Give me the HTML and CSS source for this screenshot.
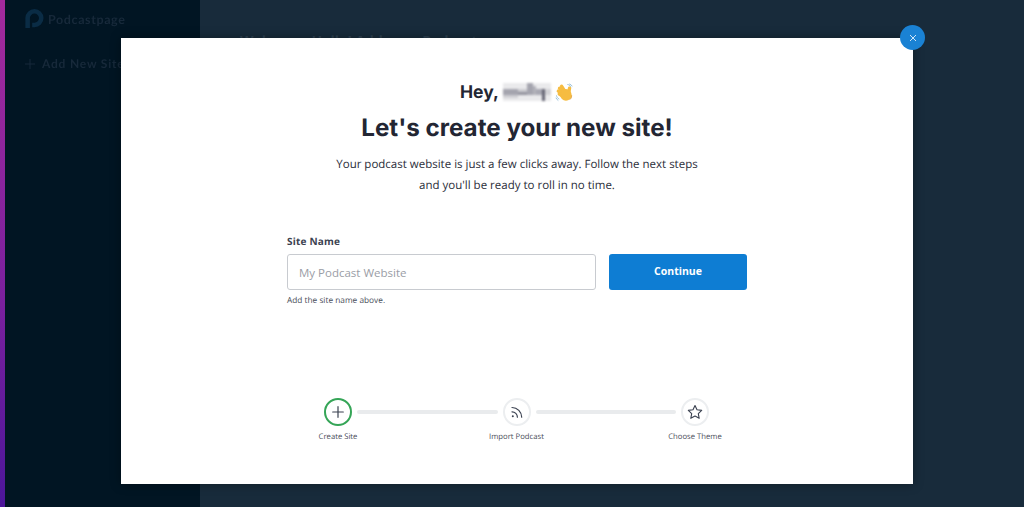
FILE: index.html
```html
<!DOCTYPE html>
<html lang="en">
<head>
  <meta charset="UTF-8" />
  <title>Create Site | Podcastpage</title>
  <link rel="stylesheet" href="styles.css">
</head>
<body>
  <div class="app">
    <div class="strip"></div>
    <aside class="sidebar">
      <div class="brand">
        <svg class="brand-logo" viewBox="0 0 22 22" width="20" height="20">
          <path d="M4 21V10a7.500 7.500 0 1 1 7.500 7.500H9" fill="none" stroke="#0a2c45" stroke-width="5"/>
        </svg>
        <span>Podcastpage</span>
      </div>
      <div class="add-site">
        <svg viewBox="0 0 12 12" width="12" height="12">
          <path d="M6 1v10M1 6h10" stroke="#17293a" stroke-width="1"/>
        </svg>
        <span>Add New Site</span>
      </div>
    </aside>
    <main class="content">
      <div class="welcome">Welcome, Hello! Add your Podcast</div>
    </main>
  </div>

  <div class="overlay">
    <div class="modal">
      <button class="close" aria-label="Close">
        <svg viewBox="0 0 8 8" width="8" height="8">
          <path d="M1 1l6 6M7 1l-6 6" stroke="#cfe6f7" stroke-width="1"/>
        </svg>
      </button>

      <div class="intro">
        <h3 class="hey">
          Hey,
          <svg class="blurred-name" viewBox="0 0 16 6" width="48" height="18" shape-rendering="crispEdges">
            <rect width="16" height="6" fill="#eaeaec"/>
            <rect x="0" y="2" width="5" height="2" fill="#a4a4ae"/>
            <rect x="0" y="4" width="5" height="1" fill="#cfcfd4"/>
            <rect x="5" y="3" width="3" height="1" fill="#94949f"/>
            <rect x="5" y="2" width="3" height="1" fill="#cbcbd0"/>
            <rect x="8" y="0" width="2" height="4" fill="#a4a4ae"/>
            <rect x="10" y="1" width="1" height="3" fill="#b2b2ba"/>
            <rect x="11" y="2" width="2" height="2" fill="#a8a8b2"/>
            <rect x="13" y="2" width="1" height="4" fill="#666674"/>
            <rect x="14" y="2" width="2" height="2" fill="#d2d2d6"/>
          </svg>
          <svg class="wave" viewBox="0 0 20 20" width="19" height="19">
            <path d="M13 1.500c1.800.2 3.200 1.400 3.800 3M15 1c1.300.4 2.500 1.200 3.200 2.500M1.500 13c.3 1.800 1.400 3.200 3 4M1 15.500c.5 1.200 1.300 2.200 2.500 3" fill="none" stroke="#7fb0d0" stroke-width=".8"/>
            <g stroke="#f6bc41" stroke-width="3.600" stroke-linecap="round">
              <path d="M11 10 7 3.500"/>
              <path d="M10.500 11 4.800 5.500"/>
              <path d="M9 12 3.500 8.500"/>
              <path d="M8.500 14 4.500 11.500"/>
              <path d="M14.500 10l.8-4.500"/>
            </g>
            <ellipse cx="11.500" cy="12.500" rx="6" ry="6.300" fill="#f6bc41"/>
            <path d="M15.500 17.500c1.300-1 2-2.500 2-4.500" fill="none" stroke="#dd9a2c" stroke-width="1"/>
          </svg>
        </h3>
        <h1>Let's create your new site!</h1>
        <p>Your podcast website is just a few clicks away. Follow the next steps<br>and you'll be ready to roll in no time.</p>
      </div>

      <form class="site-form">
        <label class="field-label" for="siteName">Site Name</label>
        <div class="field-row">
          <input type="text" id="siteName" placeholder="My Podcast Website" />
          <button type="button" class="continue">Continue</button>
        </div>
        <div class="field-help">Add the site name above.</div>
      </form>

      <div class="steps">
        <div class="step">
          <div class="step-icon active">
            <svg viewBox="0 0 16 16" width="16" height="16">
              <path d="M8 2.700v10.600M2.700 8h10.600" stroke="#3a4150" stroke-width="1.200" stroke-linecap="round"/>
            </svg>
          </div>
          <div class="step-name">Create Site</div>
        </div>
        <div class="step-line"></div>
        <div class="step">
          <div class="step-icon">
            <svg viewBox="0 0 16 16" width="16" height="16" fill="none" stroke="#3a4150" stroke-width="1.200" stroke-linecap="round">
              <circle cx="3.800" cy="12.300" r="1" fill="#3a4150" stroke="none"/>
              <path d="M3 7.800a5.400 5.400 0 0 1 5.400 5.400"/>
              <path d="M3 3.500a9.700 9.700 0 0 1 9.700 9.700"/>
            </svg>
          </div>
          <div class="step-name">Import Podcast</div>
        </div>
        <div class="step-line"></div>
        <div class="step">
          <div class="step-icon">
            <svg viewBox="0 0 16 16" width="16" height="16">
              <path d="M8 1.500l2 4.300 4.700.6-3.400 3.200.9 4.700L8 12l-4.200 2.300.9-4.700-3.400-3.200 4.700-.6Z" fill="none" stroke="#3a4150" stroke-width="1.100" stroke-linejoin="round"/>
            </svg>
          </div>
          <div class="step-name">Choose Theme</div>
        </div>
      </div>
    </div>
  </div>
</body>
</html>
```

FILE: styles.css
```css
* {
  box-sizing: border-box;
}

body {
  margin: 0;
  height: 507px;
  overflow: hidden;
  font-family: 'Open Sans', 'Noto Sans', sans-serif;
  text-rendering: geometricPrecision;
  background-color: #182b3b;
}

.app {
  display: flex;
  height: 100%;
}

.strip {
  width: 5px;
  background: linear-gradient(180deg, #a32a9c 0%, #7a209e 60%, #4c169a 100%);
}

.sidebar {
  width: 195px;
  background-color: #011523;
  padding: 9px 19px;
  filter: blur(0.5px);
}

.brand {
  display: flex;
  align-items: center;
  gap: 4px;
  color: #17293a;
  font-family: 'Lato', sans-serif;
  font-weight: 700;
  font-size: 12.500px;
  letter-spacing: 0.6px;
}

.add-site {
  display: flex;
  align-items: center;
  gap: 6px;
  margin-top: 27px;
  color: #17293a;
  font-family: 'Lato', sans-serif;
  font-weight: 700;
  font-size: 12px;
  letter-spacing: 0.8px;
  white-space: nowrap;
}

.content {
  flex: 1;
  padding: 32px 40px;
}

.welcome {
  color: #2d4050;
  font-size: 14px;
  font-weight: 700;
}

.overlay {
  position: absolute;
  left: 121px;
  top: 38px;
}

.modal {
  position: relative;
  width: 792px;
  height: 446px;
  background: white;
  box-shadow: 0 0 10px rgba(0, 0, 0, 0.35);
  padding-top: 41px;
}

.close {
  position: absolute;
  right: -12px;
  top: -13px;
  width: 25px;
  height: 25px;
  border: none;
  border-radius: 50%;
  padding: 0;
  display: flex;
  align-items: center;
  justify-content: center;
  background-color: #1a82d4;
}

.intro {
  text-align: center;
  color: #232633;
}

.hey {
  margin: 0;
  display: flex;
  justify-content: center;
  align-items: center;
  gap: 4px;
  height: 26px;
  font-family: 'Inter', sans-serif;
  font-size: 17.500px;
  font-weight: 700;
}

.blurred-name {
  filter: blur(0.8px);
}

.intro h1 {
  margin: 6px 0 0;
  font-family: 'Inter', sans-serif;
  font-size: 24.200px;
  line-height: 34px;
  font-weight: 700;
}

.intro p {
  margin: 9px 0 0;
  font-size: 11.500px;
  line-height: 21px;
  color: #2b2e3a;
}

.site-form {
  width: 460px;
  margin: 38px 0 0 166px;
}

.field-label {
  display: block;
  font-size: 10px;
  font-weight: 700;
  color: #3c4250;
  letter-spacing: 0.2px;
  line-height: 15px;
  margin-bottom: 5px;
}

.field-row {
  display: flex;
  gap: 13px;
}

.field-row input {
  width: 309px;
  height: 36px;
  padding: 0 11px;
  border: 1px solid #c8cbd0;
  border-radius: 3px;
  font-family: inherit;
  font-size: 11.500px;
  color: #333;
}

.field-row input::placeholder {
  color: #9a9da6;
  opacity: 1;
}

.continue {
  width: 138px;
  height: 36px;
  border: none;
  border-radius: 3px;
  padding: 0 0 2px;
  background-color: #0e7dd3;
  color: white;
  font-family: inherit;
  font-size: 10.500px;
  font-weight: 700;
}

.field-help {
  margin-top: 4px;
  font-size: 8.300px;
  line-height: 13px;
  color: #4a4e5a;
}

.steps {
  position: absolute;
  left: 203px;
  top: 360px;
  width: 385px;
  display: flex;
  align-items: flex-start;
}

.step {
  width: 28px;
  display: flex;
  flex-direction: column;
  align-items: center;
}

.step-icon {
  flex: none;
  width: 28px;
  height: 28px;
  border: 2px solid #eceef0;
  border-radius: 50%;
  display: flex;
  align-items: center;
  justify-content: center;
  background: white;
}

.step-icon.active {
  border-color: #35a557;
}

.step-name {
  margin-top: 5px;
  font-size: 7.700px;
  line-height: 12px;
  color: #4a4e5a;
  white-space: nowrap;
}

.step-line {
  flex: 1;
  height: 4px;
  margin: 12px 5px 0;
  border-radius: 2px;
  background-color: #e9ebed;
}
```
